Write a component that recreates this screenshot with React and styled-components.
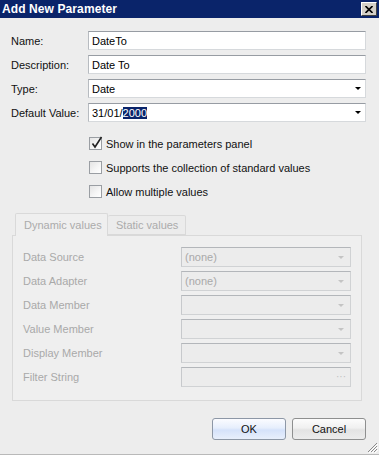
import React from "react";
import styled, { createGlobalStyle } from "styled-components";

const Global = createGlobalStyle`
  html, body { margin: 0; padding: 0; }
  body {
    width: 379px; height: 455px; overflow: hidden;
    background: #ededed;
    font-family: "Liberation Sans", Arial, sans-serif;
    font-size: 11px;
    color: #000;
  }
`;

const Window = styled.div`
  width: 379px;
  height: 455px;
  display: flex;
  flex-direction: column;
  background: #ededed;
  box-sizing: border-box;
  border-bottom: 1px solid #b9b9b9;
  position: relative;
`;

const TitleBar = styled.div`
  height: 18px;
  background: #0a246a;
  display: flex;
  align-items: center;
  justify-content: space-between;
  padding: 0 2px 0 2px;
`;

const Title = styled.div`
  color: #fff;
  font-weight: bold;
  font-size: 12px;
  letter-spacing: 0.1px;
`;

const CloseBtn = styled.div`
  width: 16px;
  height: 14px;
  box-sizing: border-box;
  background: #d4d0c8;
  border: 1px solid;
  border-color: #fff #404040 #404040 #fff;
  display: flex;
  align-items: center;
  justify-content: center;
`;

const Body = styled.div`
  flex: 1;
  display: flex;
  flex-direction: column;
  padding: 13px 13px 0 11px;
`;

const FormGrid = styled.div`
  display: grid;
  grid-template-columns: 77px 1fr;
  row-gap: 5px;
  align-items: center;
`;

const Label = styled.div`
  color: ${(p) => (p.$disabled ? "#a9a9a9" : "#111")};
  white-space: nowrap;
`;

const Field = styled.div`
  height: 19px;
  box-sizing: border-box;
  background: ${(p) => (p.$disabled ? "#ececec" : "#fff")};
  border: 1px solid;
  border-color: ${(p) =>
    p.$disabled ? "#b3b6ba #d0d2d4 #d0d2d4 #c7c9cc" : "#979ca3 #d6d9dc #d6d9dc #b7bbc0"};
  display: flex;
  align-items: center;
  padding: 0 3px 0 3px;
  color: ${(p) => (p.$disabled ? "#a9a9a9" : "#000")};
  position: relative;
`;

const FieldText = styled.span`
  flex: 1;
  white-space: nowrap;
`;

const Sel = styled.span`
  background: #0a246a;
  color: #fff;
`;

const Arrow = styled.span`
  width: 0;
  height: 0;
  border-left: 3px solid transparent;
  border-right: 3px solid transparent;
  border-top: 3px solid ${(p) => (p.$disabled ? "#c4c4c4" : "#000")};
  margin-right: ${(p) => (p.$disabled ? "3px" : "1px")};
`;

const Dots = styled.span`
  color: #c0c0c0;
  font-size: 10px;
  margin-right: 1px;
  line-height: 1;
`;

const Checks = styled.div`
  display: flex;
  flex-direction: column;
  gap: 11px;
  margin: 15px 0 0 78px;
`;

const CheckRow = styled.label`
  display: flex;
  align-items: center;
  gap: 4px;
  height: 13px;
  color: #111;
`;

const Box = styled.span`
  width: 13px;
  height: 13px;
  box-sizing: border-box;
  border: 1px solid #9a9ea3;
  background: linear-gradient(135deg, #e4e4e4 0%, #f6f6f6 60%, #ffffff 100%);
  display: flex;
  align-items: center;
  justify-content: center;
  position: relative;
`;

const Group = styled.div`
  margin: 15px 4px 0 1px;
  display: flex;
  flex-direction: column;
`;

const Tabs = styled.div`
  display: flex;
  align-items: flex-end;
  height: 22px;
  padding-left: 3px;
`;

const Tab = styled.div`
  flex: 0 0 auto;
  white-space: nowrap;
  height: ${(p) => (p.$active ? "23px" : "20px")};
  margin-bottom: ${(p) => (p.$active ? "-1px" : "0")};
  box-sizing: border-box;
  padding: 0 0 0 8px;
  display: flex;
  align-items: center;
  color: #ababab;
  border: 1px solid #d9d9d9;
  border-bottom: ${(p) => (p.$active ? "none" : "1px solid #d9d9d9")};
  border-left: ${(p) => (p.$active ? "1px solid #d9d9d9" : "none")};
  background: ${(p) => (p.$active ? "#efefef" : "#ececec")};
  border-radius: 2px 2px 0 0;
  position: relative;
  z-index: ${(p) => (p.$active ? 1 : 0)};
  width: ${(p) => p.$w}px;
`;

const Panel = styled.div`
  border: 1px solid #d9d9d9;
  background: #efefef;
  height: 166px;
  box-sizing: border-box;
  padding: 11px 0 0 10px;
`;

const PanelGrid = styled.div`
  display: grid;
  grid-template-columns: 158px 170px;
  row-gap: 4px;
  align-items: center;
  & > ${Field} {
    height: 20px;
  }
`;

const Footer = styled.div`
  display: flex;
  justify-content: flex-end;
  gap: 6px;
  margin-top: 17px;
`;

const Button = styled.button`
  width: 74px;
  height: 22px;
  box-sizing: border-box;
  font-family: "Liberation Sans", Arial, sans-serif;
  font-size: 11px;
  color: #111;
  border-radius: 3px;
  border: 1px solid ${(p) => (p.$default ? "#8d97a6" : "#8e8f8f")};
  background: ${(p) =>
    p.$default
      ? "linear-gradient(#fbfcff 0%, #e6eefc 45%, #d5e2fa 55%, #e8effc 100%)"
      : "linear-gradient(#fcfcfc 0%, #f0f0f0 45%, #e3e3e3 55%, #ececec 100%)"};
  padding: 0;
`;

const Grip = styled.svg`
  position: absolute;
  right: 1px;
  bottom: 1px;
`;

function Combo({ text, disabled, dots }) {
  return (
    <Field $disabled={disabled}>
      <FieldText>{text}</FieldText>
      {dots ? <Dots>···</Dots> : <Arrow $disabled={disabled} />}
    </Field>
  );
}

function Check({ checked, children }) {
  return (
    <CheckRow>
      <Box>
        {checked && (
          <svg width="13" height="13" viewBox="0 0 13 13" style={{ position: "absolute", left: 0, top: -2 }}>
            <path d="M2.5 7.5 L5 11 L11.5 1" fill="none" stroke="#222" strokeWidth="1.6" />
          </svg>
        )}
      </Box>
      <span>{children}</span>
    </CheckRow>
  );
}

export default function App() {
  return (
    <>
      <Global />
      <Window>
        <TitleBar>
          <Title>Add New Parameter</Title>
          <CloseBtn>
            <svg width="8" height="7" viewBox="0 0 8 7">
              <path d="M0.5 0 L7.5 7 M7.5 0 L0.5 7" stroke="#000" strokeWidth="1.6" />
            </svg>
          </CloseBtn>
        </TitleBar>
        <Body>
          <FormGrid>
            <Label>Name:</Label>
            <Field><FieldText>DateTo</FieldText></Field>
            <Label>Description:</Label>
            <Field><FieldText>Date To</FieldText></Field>
            <Label>Type:</Label>
            <Combo text="Date" />
            <Label>Default Value:</Label>
            <Field>
              <FieldText>
                31/01/<Sel>2000</Sel>
              </FieldText>
              <Arrow />
            </Field>
          </FormGrid>
          <Checks>
            <Check checked>Show in the parameters panel</Check>
            <Check>Supports the collection of standard values</Check>
            <Check>Allow multiple values</Check>
          </Checks>
          <Group>
            <Tabs>
              <Tab $active $w={93}>Dynamic values</Tab>
              <Tab $w={78}>Static values</Tab>
            </Tabs>
            <Panel>
              <PanelGrid>
                <Label $disabled>Data Source</Label>
                <Combo disabled text="(none)" />
                <Label $disabled>Data Adapter</Label>
                <Combo disabled text="(none)" />
                <Label $disabled>Data Member</Label>
                <Combo disabled text="" />
                <Label $disabled>Value Member</Label>
                <Combo disabled text="" />
                <Label $disabled>Display Member</Label>
                <Combo disabled text="" />
                <Label $disabled>Filter String</Label>
                <Combo disabled text="" dots />
              </PanelGrid>
            </Panel>
          </Group>
          <Footer>
            <Button $default>OK</Button>
            <Button>Cancel</Button>
          </Footer>
        </Body>
        <Grip width="11" height="11" viewBox="0 0 11 11">
          <path d="M10 1 L1 10 M10 4 L4 10 M10 7 L7 10" stroke="#8a8a8a" strokeWidth="1" />
          <path d="M11 2 L2 11 M11 5 L5 11 M11 8 L8 11" stroke="#fff" strokeWidth="1" />
        </Grip>
      </Window>
    </>
  );
}
